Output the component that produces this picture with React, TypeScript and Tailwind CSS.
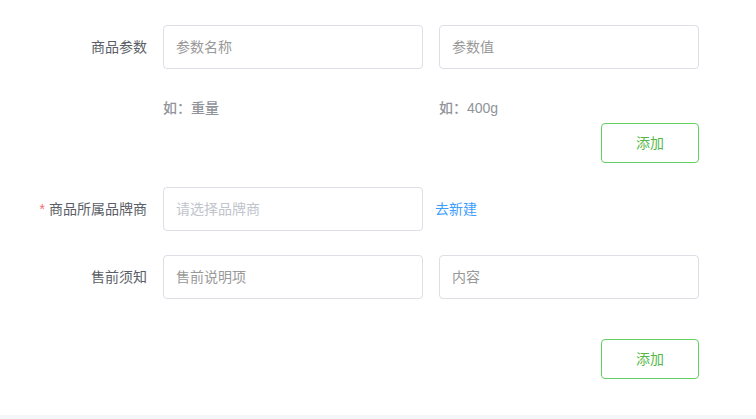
const font = { fontFamily: '"Liberation Sans", "Noto Sans CJK SC", sans-serif' };

function Field({ placeholder, light }: { placeholder: string; light?: boolean }) {
  return (
    <input
      readOnly
      placeholder={placeholder}
      className={
        'h-[44px] w-[260px] rounded-[4px] border border-[#dcdfe6] bg-white pl-3 text-[14px] outline-none ' +
        (light ? 'placeholder:text-[#c0c4cc]' : 'placeholder:text-[#999999]')
      }
      style={font}
    />
  );
}

function Label({ text, required }: { text: string; required?: boolean }) {
  return (
    <div className="mr-4 w-[147px] text-right text-[14px] text-[#5a5e66]">
      {required && <span className="mr-1 text-[#f56c6c]">*</span>}
      {text}
    </div>
  );
}

function AddButton() {
  return (
    <button className="ml-[601px] h-[40px] w-[98px] rounded-[4px] border border-[#63d063] bg-white text-[14px] text-[#55b94a]">
      添加
    </button>
  );
}

export default function App() {
  return (
    <div className="flex h-[419px] w-[756px] flex-col overflow-hidden bg-white pt-[25px]" style={font}>
      <div className="flex items-center">
        <Label text="商品参数" />
        <div className="flex gap-4">
          <Field placeholder="参数名称" />
          <Field placeholder="参数值" />
        </div>
      </div>

      <div className="mt-[29px] flex gap-4 pl-[163px] text-[14px] font-medium leading-[20px] text-[#909399]">
        <span className="w-[260px]">如：重量</span>
        <span className="w-[260px]">如：400g</span>
      </div>

      <div className="mt-[5px] flex">
        <AddButton />
      </div>

      <div className="mt-[24px] flex items-center">
        <Label text="商品所属品牌商" required />
        <Field placeholder="请选择品牌商" light />
        <a className="ml-3 cursor-pointer text-[14px] text-[#409eff]">去新建</a>
      </div>

      <div className="mt-[24px] flex items-center">
        <Label text="售前须知" />
        <div className="flex gap-4">
          <Field placeholder="售前说明项" />
          <Field placeholder="内容" />
        </div>
      </div>

      <div className="mt-[40px] flex">
        <AddButton />
      </div>

      <div className="mt-auto h-[4px] w-full bg-[#f4f7fa]" />
    </div>
  );
}
